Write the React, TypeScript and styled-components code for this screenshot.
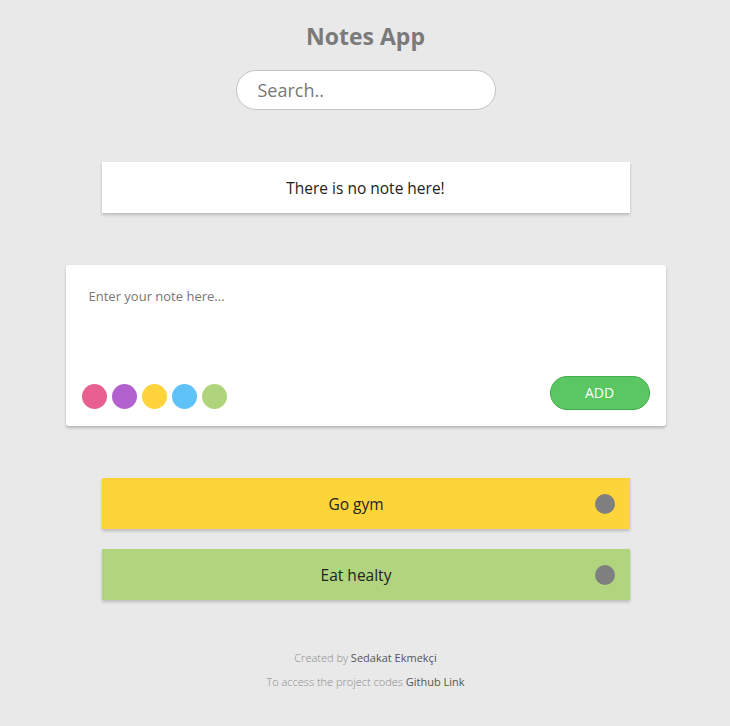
import React from "react";
import styled, { createGlobalStyle } from "styled-components";

const Global = createGlobalStyle`
  html, body { margin: 0; padding: 0; background: #e9e9e9; }
  body { font-family: "Open Sans", "Noto Sans", sans-serif; }
  * { box-sizing: border-box; }
`;

const Page = styled.div`
  display: flex;
  flex-direction: column;
  align-items: center;
  padding-top: 22px;
  padding-left: 1px;
  min-height: 726px;
`;

const Title = styled.h1`
  margin: 0;
  font-size: 23px;
  line-height: 28px;
  font-weight: 700;
  color: #7a7a7a;
`;

const Search = styled.input`
  margin-top: 20px;
  width: 260px;
  height: 40px;
  border: 1px solid #c4c4c4;
  border-radius: 20px;
  background: #fff;
  padding: 0 21px;
  font-family: inherit;
  font-size: 18px;
  color: #333;
  outline: none;
  caret-color: #000;
  &::placeholder { color: #777; }
`;

const Card = styled.div<{ $bg?: string }>`
  width: 528px;
  height: 51px;
  background: ${(p) => p.$bg || "#fff"};
  box-shadow: 0 2px 3px rgba(0, 0, 0, 0.2);
  display: flex;
  align-items: center;
  justify-content: center;
  font-size: 15.5px;
  color: #222;
`;

const EmptyCard = styled(Card)`
  margin-top: 52px;
`;

const NoteCard = styled(Card)`
  padding: 0 15px 0 16px;
`;

const NoteText = styled.span`
  flex: 1;
  text-align: center;
`;

const Form = styled.div`
  margin-top: 52px;
  width: 600px;
  height: 161px;
  background: #fff;
  border-radius: 3px;
  box-shadow: 0 2px 3px rgba(0, 0, 0, 0.22);
  padding: 22px 16px 16px 16px;
  display: flex;
  flex-direction: column;
`;

const TextArea = styled.textarea`
  flex: 1;
  border: none;
  outline: none;
  resize: none;
  font-family: inherit;
  font-size: 13px;
  padding: 0 7px;
  color: #333;
  &::placeholder { color: #777; }
`;

const FormFooter = styled.div`
  display: flex;
  align-items: center;
  justify-content: space-between;
`;

const Swatches = styled.div`
  display: flex;
  gap: 5px;
  margin-top: 6px;
`;

const Swatch = styled.span<{ $c: string }>`
  width: 25px;
  height: 25px;
  border-radius: 50%;
  background: ${(p) => p.$c};
`;

const AddButton = styled.button`
  width: 100px;
  height: 34px;
  border-radius: 17px;
  background: #5ac762;
  border: 1px solid #43ad4a;
  color: #fff;
  font-family: inherit;
  font-size: 14px;
  line-height: 1;
  padding: 0 0 1px;
  cursor: pointer;
`;

const Notes = styled.div`
  margin-top: 52px;
  display: flex;
  flex-direction: column;
  gap: 20px;
`;

const Dot = styled.span`
  flex: none;
  width: 20px;
  height: 20px;
  border-radius: 50%;
  background: #7f7f7f;
`;

const Footer = styled.footer`
  margin-top: 50px;
  display: flex;
  flex-direction: column;
  align-items: center;
  gap: 8px;
  font-size: 11px;
  font-weight: 300;
  color: #8a8a8a;
  line-height: 16px;
`;

const Strong = styled.span`
  color: #555;
  font-weight: 400;
`;

const colors = ["#e8608f", "#b262cf", "#fed33c", "#5ec2f9", "#b0d47c"];
const notes = [
  { text: "Go gym", bg: "#fed43b" },
  { text: "Eat healty", bg: "#b1d57e" },
];

export default function App() {
  return (
    <>
      <Global />
      <Page>
        <Title>Notes App</Title>
        <Search placeholder="Search.." autoFocus />
        <EmptyCard>There is no note here!</EmptyCard>
        <Form>
          <TextArea placeholder="Enter your note here..." />
          <FormFooter>
            <Swatches>
              {colors.map((c) => (
                <Swatch key={c} $c={c} />
              ))}
            </Swatches>
            <AddButton>ADD</AddButton>
          </FormFooter>
        </Form>
        <Notes>
          {notes.map((n) => (
            <NoteCard key={n.text} $bg={n.bg}>
              <NoteText>{n.text}</NoteText>
              <Dot />
            </NoteCard>
          ))}
        </Notes>
        <Footer>
          <div>
            Created by <Strong>Sedakat Ekmekçi</Strong>
          </div>
          <div>
            To access the project codes <Strong>Github Link</Strong>
          </div>
        </Footer>
      </Page>
    </>
  );
}
